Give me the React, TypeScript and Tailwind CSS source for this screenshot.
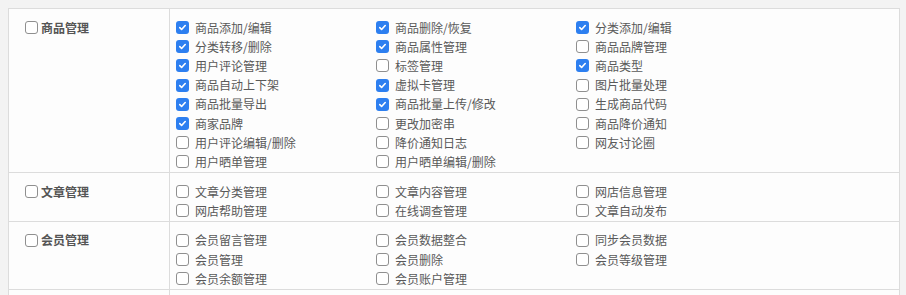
import React from 'react'

type Perm = { label: string; checked?: boolean }
type Group = { title: string; items: Perm[] }

const groups: Group[] = [
  {
    title: '商品管理',
    items: [
      { label: '商品添加/编辑', checked: true },
      { label: '商品删除/恢复', checked: true },
      { label: '分类添加/编辑', checked: true },
      { label: '分类转移/删除', checked: true },
      { label: '商品属性管理', checked: true },
      { label: '商品品牌管理' },
      { label: '用户评论管理', checked: true },
      { label: '标签管理' },
      { label: '商品类型', checked: true },
      { label: '商品自动上下架', checked: true },
      { label: '虚拟卡管理', checked: true },
      { label: '图片批量处理' },
      { label: '商品批量导出', checked: true },
      { label: '商品批量上传/修改', checked: true },
      { label: '生成商品代码' },
      { label: '商家品牌', checked: true },
      { label: '更改加密串' },
      { label: '商品降价通知' },
      { label: '用户评论编辑/删除' },
      { label: '降价通知日志' },
      { label: '网友讨论圈' },
      { label: '用户晒单管理' },
      { label: '用户晒单编辑/删除' },
    ],
  },
  {
    title: '文章管理',
    items: [
      { label: '文章分类管理' },
      { label: '文章内容管理' },
      { label: '网店信息管理' },
      { label: '网店帮助管理' },
      { label: '在线调查管理' },
      { label: '文章自动发布' },
    ],
  },
  {
    title: '会员管理',
    items: [
      { label: '会员留言管理' },
      { label: '会员数据整合' },
      { label: '同步会员数据' },
      { label: '会员管理' },
      { label: '会员删除' },
      { label: '会员等级管理' },
      { label: '会员余额管理' },
      { label: '会员账户管理' },
    ],
  },
]

function Box({ checked }: { checked?: boolean }) {
  if (checked) {
    return (
      <span className="flex h-[13px] w-[13px] shrink-0 items-center justify-center rounded-[3px] bg-[#2d7ff0]">
        <svg width="9" height="9" viewBox="0 0 10 10" fill="none">
          <path d="M2 5.2l2 2L8 2.8" stroke="#fff" strokeWidth={1.8} strokeLinecap="round" strokeLinejoin="round" />
        </svg>
      </span>
    )
  }
  return <span className="h-[13px] w-[13px] shrink-0 rounded-[3px] border border-[#8f8f8f] bg-white" />
}

function GroupRow({ group }: { group: Group }) {
  return (
    <div className="grid grid-cols-[161px_1fr] border-b border-[#dcdcdc]">
      <div className="border-r border-[#dcdcdc] pl-4 pt-[9px]">
        <label className="flex h-[19.2px] items-center gap-[3px] font-bold text-[#555]">
          <Box />
          <span>{group.title}</span>
        </label>
      </div>
      <div className="grid grid-cols-[200px_200px_200px] content-start pl-[6px] pt-[9px] pb-[0.5px]">
        {group.items.map((p) => (
          <label key={p.label} className="flex h-[19.2px] items-center gap-[6px] text-[#595959]">
            <Box checked={p.checked} />
            <span>{p.label}</span>
          </label>
        ))}
      </div>
    </div>
  )
}

export default function App() {
  return (
    <div
      className="min-h-screen bg-[#f3f3f3] pl-2 pr-[6px] pt-2 text-[12px] leading-none"
      style={{ fontFamily: '"Noto Sans CJK SC", "Noto Sans", sans-serif' }}
    >
      <div className="border-l border-r border-t border-[#dcdcdc] bg-[#fdfdfd]">
        {groups.map((g) => (
          <GroupRow key={g.title} group={g} />
        ))}
        <div className="grid h-[40px] grid-cols-[161px_1fr]">
          <div className="border-r border-[#dcdcdc]" />
          <div />
        </div>
      </div>
    </div>
  )
}
